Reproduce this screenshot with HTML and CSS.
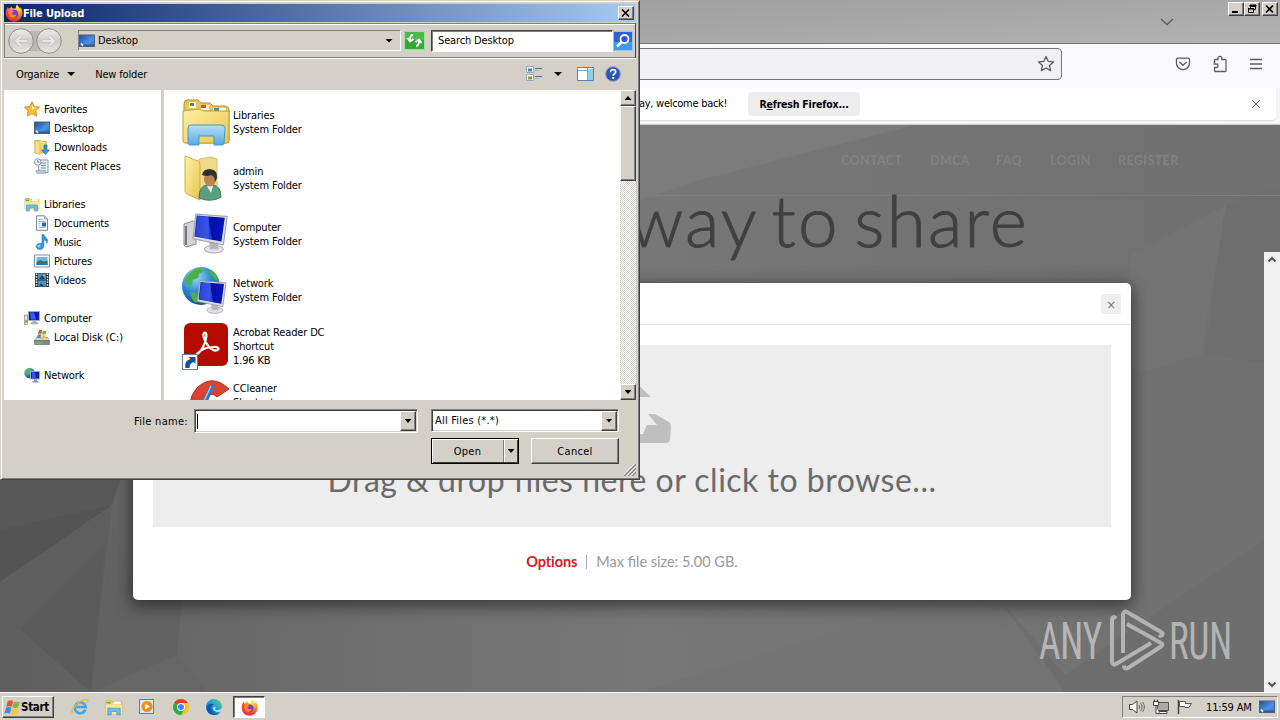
FILE: index.html
```html
<!DOCTYPE html>
<html lang="en">

<head>
    <meta charset="UTF-8">
    <meta name="viewport" content="width=device-width, initial-scale=1.0">
    <title>File Upload</title>
    <link rel="stylesheet" href="styles.css">
</head>

<body>
    <!-- Shared icons and gradients -->
    <svg class="defs" width="0" height="0">
        <defs>
            <linearGradient id="gScreen" x1="0" y1="0" x2="1" y2="1">
                <stop offset="0" stop-color="#1d4c9c"/><stop offset=".6" stop-color="#4b93e4"/><stop offset="1" stop-color="#2a6ec8"/>
            </linearGradient>
            <linearGradient id="gBlue" x1="0" y1="0" x2="1" y2="0">
                <stop offset="0" stop-color="#0a1cae"/><stop offset=".45" stop-color="#2240e0"/><stop offset=".5" stop-color="#0210a8"/><stop offset="1" stop-color="#0418c0"/>
            </linearGradient>
            <linearGradient id="gFolder" x1="0" y1="0" x2="1" y2="1">
                <stop offset="0" stop-color="#fdf3a6"/><stop offset="1" stop-color="#e8c44c"/>
            </linearGradient>
            <linearGradient id="gStand" x1="0" y1="0" x2="0" y2="1">
                <stop offset="0" stop-color="#b5e0f8"/><stop offset="1" stop-color="#58a9de"/>
            </linearGradient>
            <radialGradient id="gGlobe" cx=".35" cy=".25" r=".85">
                <stop offset="0" stop-color="#9be0f5"/><stop offset=".5" stop-color="#2a86d0"/><stop offset="1" stop-color="#123f8c"/>
            </radialGradient>
            <radialGradient id="gFox" cx=".7" cy=".15" r="1">
                <stop offset="0" stop-color="#fff04a"/><stop offset=".35" stop-color="#ffa320"/><stop offset=".7" stop-color="#ff4038"/><stop offset="1" stop-color="#d6106c"/>
            </radialGradient>
            <linearGradient id="gRound" x1="0" y1="0" x2="0" y2="1">
                <stop offset="0" stop-color="#eeecea"/><stop offset=".5" stop-color="#cfccc8"/><stop offset="1" stop-color="#e8e6e3"/>
            </linearGradient>
            <linearGradient id="gEdge" x1="0" y1="1" x2="1" y2="0">
                <stop offset="0" stop-color="#0c59a4"/><stop offset=".5" stop-color="#1b9de2"/><stop offset="1" stop-color="#5fd968"/>
            </linearGradient>
        </defs>

        <symbol id="i-firefox" viewBox="0 0 16 16">
            <path d="M8 15.8A7.5 7.5 0 0 1 .6 8.3C.6 5.9 1.4 4 2.6 2.4l.5 1.8L5 3.4 5.3 1.9 7 4l2.5.1C9.600 2.400 9.900 1.200 10.700.2c.5 1.600 1.900 2.500 2.900 3.700.2-.4.1-.8.1-1.200 1.300 1.600 1.800 3.600 1.800 5.600A7.500 7.500 0 0 1 8 15.800z" fill="url(#gFox)"/>
            <circle cx="8.200" cy="8.800" r="3.600" fill="#7b3fc4"/>
            <path d="M3.200 6.200c1.800-.9 3.500-.4 4.800.7-1 .2-1.900.5-1.800 1.300.1 1.500 2.600 2 4 .8-.3 2.300-2 3.200-3.800 3-2.400-.4-3.500-2.800-3.200-5.800z" fill="#ff8a1e"/>
        </symbol>
        <symbol id="i-desktop" viewBox="0 0 16 16">
            <rect x=".5" y="2" width="15" height="11.500" fill="url(#gScreen)" stroke="#4d637c"/>
            <path d="M1 11.500h14v1.800H1z" fill="#3a5a80"/>
            <path d="M1.500 11.500l1-1.500 2 2-1 1.500z" fill="#e6f4ff"/>
        </symbol>
        <symbol id="i-star" viewBox="0 0 16 16">
            <path d="M8 .8l2.300 4.800 5.200.6-3.800 3.600 1 5.200L8 12.500 3.300 15l1-5.200L.5 6.200l5.200-.6z" fill="#fcbf3c" stroke="#dd8518"/>
            <path d="M8 3l1.400 3.400 3.600.5-5 1.500z" fill="#fff0a8"/>
        </symbol>
        <symbol id="i-download" viewBox="0 0 16 16">
            <path d="M1 1.500h6l1 1h4.500V14H1z" fill="url(#gFolder)" stroke="#c9a238" stroke-width=".7"/>
            <path d="M1 1.500l5 2V15.500L1 14z" fill="#f8e289" stroke="#caa640" stroke-width=".6"/>
            <path d="M10 6h3v5h2.500l-4 4.500-4-4.500H10z" fill="#349be4" stroke="#17659f" stroke-width=".6"/>
        </symbol>
        <symbol id="i-recent" viewBox="0 0 16 16">
            <path d="M4 2h10v12.500H5z" fill="#e9f0f4" stroke="#8b9ba6"/>
            <path d="M7 5h5M7 7.500h5M7 10h5" stroke="#5c8fb5"/>
            <path d="M2 12.500h9.500v2.800H3z" fill="#b8ccd8" stroke="#8497a5" stroke-width=".6"/>
            <circle cx="3.800" cy="4" r="3.200" fill="#fff" stroke="#8094a0"/>
            <path d="M3.800 2v2.200h1.700" stroke="#345" fill="none" stroke-width=".8"/>
        </symbol>
        <symbol id="i-libs" viewBox="0 0 48 48">
            <path d="M2 6q0-4 3-4h11l3 3h9l3 3h11q5 0 5 4v30q0 3-3 3H5q-3 0-3-3z" fill="#e5c75b" stroke="#b9912c"/>
            <path d="M7 4h7v6H7z" fill="#fff"/><path d="M8 5h4v3H8z" fill="#4b9646"/>
            <path d="M19 7h8v5h-8z" fill="#fff"/><path d="M19 7h5v3h-5z" fill="#d8483c"/>
            <path d="M31 10h13v4H31z" fill="#fff"/><path d="M32 10h5v3h-5z" fill="#3c92a0"/>
            <path d="M1 13l16-2 5 2h25v30q0 2-2 2H3q-2 0-2-2z" fill="url(#gFolder)" stroke="#c39c36"/>
            <path d="M6 30q0-3 3-3h30q4 0 4 3l-1 15q0 2-2 2h-8v-9H17v9H8q-2 0-2-2z" fill="url(#gStand)" stroke="#489acb"/>
        </symbol>
        <symbol id="i-doc" viewBox="0 0 16 16">
            <path d="M2.500.8h8l3 3v11.500h-11z" fill="#fafcff" stroke="#7889a0"/>
            <path d="M10.500.8v3h3" fill="#dce6f0" stroke="#7889a0" stroke-width=".7"/>
            <path d="M4.500 4.500h4M4.500 6.500h7M4.500 8.500h2M4.500 10.500h2M4.500 12.500h7" stroke="#8ea6c2" stroke-width=".8"/>
            <path d="M8 7.500h4v4H8z" fill="#2c66a8"/>
        </symbol>
        <symbol id="i-music" viewBox="0 0 16 16">
            <path d="M8 .5h1.800c.3 2.500 3.700 3 3.700 6 0 1.300-.4 2-1 2.700.2-2.500-1.300-3-2.700-3.400v6.400c0 2-1.700 3.200-4 3.200-2 0-3.600-1-3.600-2.800 0-2 1.800-3.200 4-3.200.7 0 1.300.1 1.800.4z" fill="#2c98e2" stroke="#1a6db4" stroke-width=".6"/>
            <circle cx="5" cy="12" r="1.500" fill="#8fd2fa"/>
        </symbol>
        <symbol id="i-pic" viewBox="0 0 16 16">
            <path d="M.5 2h15v12H.5z" fill="#fff" stroke="#7193ad"/>
            <path d="M2.500 4h11v8h-11z" fill="#68bcec"/>
            <path d="M2.500 9l4-2 3 1.500 4-1v4.500h-11z" fill="#34795a"/><path d="M2.500 10.500h11V12h-11z" fill="#2878b4"/>
        </symbol>
        <symbol id="i-video" viewBox="0 0 16 16">
            <path d="M1 1h14v14H1z" fill="#29323a"/>
            <path d="M4 1.500h8v6H4zM4 8.500h8v6H4z" fill="#4a93c6"/>
            <path d="M2.500 1.500v13M13.500 1.500v13" stroke="#fff" stroke-width="1.500" stroke-dasharray="1.500 1.200"/>
            <path d="M5 7l3-4 3 4zM5 14l2-3 3 3z" fill="#1e3f60"/><circle cx="10" cy="3.500" r="1" fill="#e58f83"/>
        </symbol>
        <symbol id="i-pc" viewBox="0 0 16 16">
            <path d="M.5 5h3v9.500h-3z" fill="#e5e2c8" stroke="#858585" stroke-width=".7"/>
            <path d="M1 10h2v3H1z" fill="#9db35a"/>
            <path d="M4.500 1.500h11v9h-11z" fill="#0c1fb4" stroke="#a3acb9"/>
            <path d="M6 2.500h4l2 7H7z" fill="#3c5ae6"/>
            <path d="M8.500 11h4v1.500h2v1.700h-8v-1.700h2z" fill="#a9aeb8"/>
        </symbol>
        <symbol id="i-disk" viewBox="0 0 16 16">
            <path d="M2.500 8.500h11l2 3H.5z" fill="#cfd5cf" stroke="#788078" stroke-width=".6"/>
            <path d="M.5 11.500h15v4H.5z" fill="#7d8d86" stroke="#55645d" stroke-width=".6"/>
            <path d="M1.500 13h6v1.500h-6z" fill="#5fcf4a"/>
            <use href="#i-win" x="2" y="0" width="12" height="11"/>
        </symbol>
        <symbol id="i-win" viewBox="0 0 16 16">
            <path d="M3.500 2C5.500.8 7 1.100 8.500 2L7.200 7.400C5.600 6.500 4 6.500 2 7.500z" fill="#ea5427"/>
            <path d="M9.300 2.400c1.700.9 3.600.9 5.700-.1l-1.500 5.500c-1.900.9-3.500.9-5.500-.1z" fill="#7db83c"/>
            <path d="M1.800 8.300c1.900-1 3.500-1 5.200-.1l-1.500 5.600c-1.700-1-3.400-.8-5.200 0z" fill="#3d8ede"/>
            <path d="M7.800 8.600c1.900.9 3.600.9 5.500.1l-1.500 5.600c-2 .9-3.700.9-5.500-.1z" fill="#f8c52c"/>
        </symbol>
        <symbol id="i-net" viewBox="0 0 16 16">
            <circle cx="5.500" cy="6" r="5.200" fill="url(#gGlobe)"/>
            <path d="M2 3l3-2 2 2-2 2-1 3-2-1z" fill="#52b651"/>
            <path d="M6.500 4.500h9v7.500h-9z" fill="#0c1fb4" stroke="#a3acb9"/>
            <path d="M8 5.500h3l1 6H8z" fill="#3c5ae6"/>
            <path d="M10 12.500h3v1.500h1.500v1.500h-6V14H10z" fill="#8c93a0"/>
        </symbol>
        <symbol id="i-monitor" viewBox="0 0 40 44">
            <ellipse cx="23" cy="38" rx="10" ry="4" fill="#e2e2e6" stroke="#a3a3aa"/>
            <path d="M18 29l9 2 1 7h-9z" fill="#b4b5bc"/>
            <path d="M4 1l33 2.500-4 30L1 27z" fill="#dcdde2" stroke="#9698a2"/>
            <path d="M5 2.500L34.500 5 31 30 2.500 24.500z" fill="url(#gBlue)"/>
            <path d="M6 3l11 1 4 24-18-4z" fill="#4b6cf0" opacity=".5"/>
        </symbol>
        <symbol id="i-explorer" viewBox="0 0 16 16">
            <path d="M1 2.500h5l1 1h8v9.500H1z" fill="#f4d872" stroke="#c7a23c" stroke-width=".6"/>
            <path d="M8 3.200h6v2H8z" fill="#fff"/><path d="M2 3.500h3v1.500H2z" fill="#4fae56"/>
            <path d="M1 6h14v8H1z" fill="#fbe99c"/>
            <path d="M2.500 9h11v6h-3v-3h-5v3h-3z" fill="#6dbcea" stroke="#3f92c4" stroke-width=".6"/>
        </symbol>
    </svg>

    <div class="desktop">
        <!-- Browser window -->
        <div class="browser">
            <div class="tab-strip">
                <svg class="tabs-arrow" width="14" height="8" viewBox="0 0 14 8"><path d="M1 1l6 5.500L13 1" fill="none" stroke="#5e5e5e" stroke-width="1.300"/></svg>
                <div class="win-buttons">
                    <span class="win-btn"><svg width="12" height="10"><path d="M2 7h6v2H2z"/></svg></span>
                    <span class="win-btn"><svg width="12" height="10"><path d="M4.500 1.500h5v4h-5zM4 1h6v1.500H4z" fill="none" stroke="#000"/><path d="M2.500 4.500h5v4h-5z" fill="#d4d0c8" stroke="#000"/><path d="M2 4h6v1.500H2z"/></svg></span>
                    <span class="win-btn last"><svg width="12" height="10"><path d="M2 1.500l7 7M9 1.500l-7 7" stroke="#000" stroke-width="1.700"/></svg></span>
                </div>
            </div>

            <div class="nav-bar">
                <div class="url-bar">
                    <svg width="18" height="18" viewBox="0 0 18 18"><path d="M9 1.500l2.200 4.800 5.200.6-3.900 3.500 1.100 5.200L9 13l-4.600 2.600 1.100-5.200L1.600 6.900l5.200-.6z" fill="none" stroke="#5b5b66" stroke-width="1.300" stroke-linejoin="round"/></svg>
                </div>
                <div class="nav-icons">
                    <svg width="16" height="16" viewBox="0 0 16 16" fill="none" stroke="#5b5b66" stroke-width="1.300" stroke-linecap="round"><path d="M3 2.200h10q1.500 0 1.500 1.500v3.500a6.500 6.500 0 0 1-13 0V3.700Q1.500 2.200 3 2.200z"/><path d="M4.700 6.200L8 9.300l3.300-3.100"/></svg>
                    <svg width="16" height="18" viewBox="0 0 16 18" fill="none" stroke="#5b5b66" stroke-width="1.300" stroke-linejoin="round"><path d="M2.500 8V5.500q0-1 1-1H6V3.200a1.900 1.900 0 0 1 3.800 0v1.300h3.200q1 0 1 1v10q0 1-1 1H3.500q-1 0-1-1v-3h1.800a1.700 1.700 0 0 0 0-3.500H1.500"/></svg>
                    <svg width="14" height="16" viewBox="0 0 14 16"><path d="M1 3.500h12M1 8h12M1 12.500h12" stroke="#5b5b66" stroke-width="1.300"/></svg>
                </div>
            </div>

            <div class="notice-wrap">
                <div class="notice">
                    <span class="notice-text">ay, welcome back!</span>
                    <span class="refresh-btn">R<u>e</u>fresh Firefox...</span>
                    <svg class="notice-close" width="10" height="10" viewBox="0 0 10 10"><path d="M1 1l8 8M9 1L1 9" stroke="#5b5b66"/></svg>
                </div>
            </div>

            <div class="page">
                <svg class="page-bg" viewBox="0 0 1280 567" preserveAspectRatio="none">
                    <defs>
                        <linearGradient id="gPage" x1="0" y1="0" x2="1" y2="0">
                            <stop offset="0" stop-color="#5e5e5e"/><stop offset=".16" stop-color="#696969"/><stop offset=".5" stop-color="#777"/><stop offset="1" stop-color="#707070"/>
                        </linearGradient>
                    </defs>
                    <path d="M0 0h1280v567H0z" fill="url(#gPage)"/>
                    <path d="M640 0h275L700 55l-60 20z" fill="#7b7b7b"/>
                    <path d="M1225 80l55-20v180l-75-10z" fill="#6e6e6e"/>
                    <path d="M1131 130l95-50-25 150-70 20z" fill="#747474"/>
                    <path d="M0 340h125L112 380 0 457z" fill="#585858"/>
                    <path d="M0 405l112-25L0 457z" fill="#545454"/>
                    <path d="M0 457l112-77-21 187L0 487z" fill="#5e5e5e"/>
                    <path d="M91 567L20 504l85-85z" fill="#5b5b5b"/>
                    <path d="M177 530l6-70h-50l-20-60-22 167z" fill="#626262"/>
                    <path d="M91 567l86-37 30 37z" fill="#666"/>
                    <path d="M970 465l95 102H640z" fill="#747474"/>
                    <path d="M1000 475l65 75 199-135v152H1065z" fill="#6d6d6d"/>
                </svg>
                <div class="site-nav">
                    <span class="n1">CONTACT</span><span class="n2">DMCA</span><span class="n3">FAQ</span><span class="n4">LOGIN</span><span class="n5">REGISTER</span>
                </div>
                <div class="hero">way to share</div>

                <div class="modal">
                    <div class="modal-head"><span class="modal-close">×</span></div>
                    <div class="drop-zone">
                        <svg class="upload-icon" width="80" height="60" viewBox="0 0 80 60"><path d="M39 -1L59 18H48v18H30V18H19zM19 35h6l-10 11h10l4 9h22l4-9h10L56 35h7l14 8q2 2 2 5l-1 13q-1 3-4 3H5q-3 0-4-3L0 49z" fill="#bfbfbf"/></svg>
                        <div class="drop-text">Drag &amp; drop files here or click to browse...</div>
                    </div>
                    <div class="modal-foot"><b>Options</b><i></i><span>Max file size: 5.00 GB.</span></div>
                </div>

                <svg class="watermark" width="196" height="66" viewBox="0 0 196 66">
                    <g fill="#fff" opacity=".48" font-family="Roboto, sans-serif" font-size="51">
                        <text x="2" y="50" textLength="63" lengthAdjust="spacingAndGlyphs">ANY</text>
                        <text x="132" y="50" textLength="63" lengthAdjust="spacingAndGlyphs">RUN</text>
                    </g>
                    <path d="M79 9.500c-2-2-4-2-4 1V53c0 2 2 3 4 2l35-21M86 44V6c0-3 2-4 4-3l34 20c3 2 1 5-2 3M90 15l34 19c2 1 2 2 0 3.500L91 59c-2 1-4 1-4-2.500" fill="none" stroke="#fff" stroke-width="4" opacity=".48"/>
                </svg>

                <div class="page-scroll">
                    <svg width="10" height="7" viewBox="0 0 10 7"><path d="M1.500 5.500L5 2l3.500 3.500" fill="none" stroke="#505050" stroke-width="2"/></svg>
                    <svg width="10" height="7" viewBox="0 0 10 7"><path d="M1.500 1.500L5 5l3.500-3.500" fill="none" stroke="#505050" stroke-width="2"/></svg>
                </div>
            </div>
        </div>

        <!-- Taskbar -->
        <div class="taskbar">
            <div class="start-btn"><svg width="17" height="17"><use href="#i-win"/></svg>Start</div>
            <div class="quick">
                <svg width="18" height="18" viewBox="0 0 18 18"><path d="M14.500 11.500A5.500 5.500 0 1 1 14.700 9H5" fill="none" stroke="#42a6e4" stroke-width="2.600"/><path d="M1.500 15.500C-1 12 8 1.500 15.500 1.500c2 0 1.500 2 1 3" fill="none" stroke="#e9b92e" stroke-width="1.300"/></svg>
                <svg width="18" height="18"><use href="#i-explorer"/></svg>
                <svg width="18" height="18" viewBox="0 0 18 18"><path d="M1.500 1.500h14v14h-14z" fill="#d8eaf8" stroke="#4785bd"/><circle cx="9" cy="8.500" r="5.500" fill="#f38b1c"/><path d="M7 5.500l5 3-5 3z" fill="#fff"/></svg>
                <svg width="18" height="18" viewBox="0 0 18 18"><circle cx="9" cy="9" r="8" fill="#fbc116"/><path d="M9 9L2.100 5A8 8 0 0 1 15.900 5H9z" fill="#e33b2e"/><path d="M2.100 5A8 8 0 0 0 9 17l3.500-6L9 9z" fill="#2da94f"/><circle cx="9" cy="9" r="4" fill="#fff"/><circle cx="9" cy="9" r="3" fill="#4285f4"/></svg>
                <svg width="18" height="18" viewBox="0 0 18 18"><circle cx="9" cy="9" r="8" fill="url(#gEdge)"/><path d="M1.500 10C2 6 6 5 9 6.500c-3 1-4 5-1 8 2 1.600 5 1.500 7 .2-4 4.300-13 2.300-13.500-4.700z" fill="#0e5cad"/><path d="M9.200 8.500c2 .2 1.500 2 .8 2.700 2 1.500 5.500 1 7-1.500v3c-2.500 2-7.500 1.600-8.800-1.200-.5-1.200 0-2.500 1-3z" fill="#d4d0c8"/></svg>
            </div>
            <div class="task-active"><svg width="17" height="17"><use href="#i-firefox"/></svg></div>
            <div class="tray">
                <svg width="17" height="16" viewBox="0 0 17 16"><path d="M1.500 5.500h3L9 2v12l-4.500-3.500h-3z" fill="#fff" stroke="#444"/><path d="M11 6q1.500 2 0 4M12.700 4q3 4 0 8M14.600 3q3.500 5 0 10" fill="none" stroke="#666"/></svg>
                <svg width="17" height="16" viewBox="0 0 17 16"><path d="M5.500 3.500h11v8h-11z" fill="#aaa" stroke="#555"/><path d="M7 12.500h8v2H7z" fill="#fff" stroke="#444"/><path d="M1.500 2.500h5v4h-5zM2.500.5v2M5.500.5v2M4 6.500v8h3" fill="#fff" stroke="#444"/></svg>
                <svg width="17" height="16" viewBox="0 0 17 16"><path d="M2.500 1v14" stroke="#444" stroke-width="1.500"/><path d="M3.500 2.500h6v2h6l-2.500 4H9V7.500H3.500z" fill="#fff" stroke="#555"/></svg>
                <span class="clock">11:59 AM</span>
                <svg width="16" height="16"><use href="#i-desktop"/></svg>
            </div>
        </div>

        <!-- File upload dialog -->
        <div class="dialog">
            <div class="dlg-title">
                <svg width="18" height="18"><use href="#i-firefox"/></svg>
                <span>File Upload</span>
                <span class="win-btn"><svg width="12" height="10"><path d="M2 1.500l7 7M9 1.500l-7 7" stroke="#000" stroke-width="1.500"/></svg></span>
            </div>

            <div class="dlg-nav">
                <svg class="back-fwd" width="56" height="28" viewBox="0 0 56 28">
                    <path d="M14 4h28v20H14z" fill="#bbb8b4"/>
                    <g fill="url(#gRound)" stroke="#8e8c89"><circle cx="14" cy="14" r="12.300"/><circle cx="42" cy="14" r="12.300"/></g>
                    <path d="M20 14H9m5-5l-5 5 5 5M36 14h11m-5-5l5 5-5 5" fill="none" stroke="#c4c2bf" stroke-width="3.500"/>
                    <path d="M20 14H9m5-5l-5 5 5 5M36 14h11m-5-5l5 5-5 5" fill="none" stroke="#e9e7e5" stroke-width="2"/>
                </svg>
                <div class="address">
                    <svg width="16" height="16"><use href="#i-desktop"/></svg>
                    <span>Desktop</span>
                    <i class="arrow"></i>
                </div>
                <svg class="refresh" width="21" height="19" viewBox="0 0 21 19"><path d="M.5.5h20v18H.5z" fill="#32ab35" stroke="#a8dba0"/><path d="M1 1h19v8H1z" fill="#66c869" opacity=".5"/><path d="M9 4q-3 0-3 5M3.500 7L6 10.500 9.500 8M12 15q3 0 3-5M11.500 11L15 8.500 17.500 12" fill="none" stroke="#fff" stroke-width="1.800"/></svg>
                <div class="search">Search Desktop</div>
                <svg class="search-go" width="20" height="20" viewBox="0 0 20 20"><path d="M.5.5h19v19H.5z" fill="#2f62d4" stroke="#9fc2ee"/><path d="M1 11h18v8H1z" fill="#46b4f0" opacity=".7"/><circle cx="11.500" cy="8" r="4" fill="#2a57cc" stroke="#fff" stroke-width="1.800"/><path d="M8.500 11L4 15.500" stroke="#fff" stroke-width="2.500"/></svg>
            </div>

            <div class="dlg-tools">
                <span>Organize</span><i class="arrow"></i>
                <span class="new-folder">New folder</span>
                <svg class="view-icon" width="17" height="16" viewBox="0 0 17 16"><path d="M.5.5h7v6h-7zM.5 8.500h7v6h-7z" fill="#fff" stroke="#9aa5b2"/><path d="M2 2.500h4v3H2z" fill="#3d83c6"/><path d="M2 10.500h4v3H2z" fill="#7c9c38"/><path d="M9 2.500h7M9 10.500h7" stroke="#4b6c8e"/><path d="M9 4.500h4M9 12.500h4" stroke="#9eb0c2"/></svg>
                <i class="arrow"></i>
                <svg class="pane-icon" width="17" height="15" viewBox="0 0 17 15"><path d="M.5.5h16v13H.5z" fill="#fff" stroke="#5682ac"/><path d="M1 3.500h10M10.500 1v12" stroke="#7aa3c4"/><path d="M11 2h5v11h-5z" fill="#8fcfe8"/></svg>
                <svg class="help-icon" width="16" height="16" viewBox="0 0 16 16"><circle cx="8" cy="8" r="7.300" fill="#2d55b4" stroke="#8294bb"/><path d="M5.500 6.200c0-3.600 5.200-3.200 5.200-.3 0 1.800-2.500 1.900-2.500 3.800" fill="none" stroke="#fff" stroke-width="1.700"/><path d="M7.300 11h1.900v1.900H7.300z" fill="#fff"/></svg>
            </div>

            <div class="dlg-main">
                <div class="side">
                    <div class="side-group">
                        <div class="top"><svg><use href="#i-star"/></svg>Favorites</div>
                        <div><svg><use href="#i-desktop"/></svg>Desktop</div>
                        <div><svg><use href="#i-download"/></svg>Downloads</div>
                        <div><svg><use href="#i-recent"/></svg>Recent Places</div>
                    </div>
                    <div class="side-group">
                        <div class="top"><svg><use href="#i-explorer"/></svg>Libraries</div>
                        <div><svg><use href="#i-doc"/></svg>Documents</div>
                        <div><svg><use href="#i-music"/></svg>Music</div>
                        <div><svg><use href="#i-pic"/></svg>Pictures</div>
                        <div><svg><use href="#i-video"/></svg>Videos</div>
                    </div>
                    <div class="side-group">
                        <div class="top"><svg><use href="#i-pc"/></svg>Computer</div>
                        <div><svg><use href="#i-disk"/></svg>Local Disk (C:)</div>
                    </div>
                    <div class="side-group">
                        <div class="top"><svg><use href="#i-net"/></svg>Network</div>
                    </div>
                </div>

                <div class="files">
                    <div class="file"><svg viewBox="0 0 48 48"><use href="#i-libs"/></svg><p>Libraries<br>System Folder</p></div>
                    <div class="file">
                        <svg viewBox="0 0 48 48">
                            <path d="M17 5l12-2 6 2v35l-18 5z" fill="#f0d987" stroke="#d9bd68"/>
                            <path d="M3 2l13 5q2 1 2 4v35L5 40q-2-1-2-3z" fill="url(#gFolder)" stroke="#d0ac4a"/>
                            <path d="M17 44q0-12 8-13h6q8 1 8 12-10 6-22 1z" fill="#5a9f80" stroke="#3b7c60"/>
                            <path d="M25 32l4 7 2-7z" fill="#eef3ef"/>
                            <ellipse cx="28" cy="25" rx="6" ry="7.500" fill="#b98457"/>
                            <path d="M20 21q1-6 8-6 8 1 7 9l-2 4q0-6-4-7-4 2-9 0z" fill="#32302f"/>
                        </svg><p>admin<br>System Folder</p>
                    </div>
                    <div class="file">
                        <svg viewBox="0 0 48 48">
                            <path d="M2 14l9-3 3 2v21l-10 3-2-2z" fill="#d2d3d6" stroke="#8a8b90"/><path d="M4 16v19" stroke="#777" stroke-width="2"/>
                            <use href="#i-monitor" x="10" y="3" width="38" height="42"/>
                        </svg><p>Computer<br>System Folder</p>
                    </div>
                    <div class="file">
                        <svg viewBox="0 0 48 48">
                            <circle cx="19" cy="20" r="19" fill="url(#gGlobe)"/>
                            <path d="M7 8q5-6 12-6l3 3-5 3-1 4-5 2-2 6-5-2-1-5zM27 3q8 4 10 13l-5-3-4-5zM8 26l6 1 3 6-3 4q-5-3-6-11z" fill="#4cb04a"/>
                            <use href="#i-monitor" x="14" y="14" width="33" height="35"/>
                        </svg><p>Network<br>System Folder</p>
                    </div>
                    <div class="file">
                        <svg viewBox="0 0 48 48">
                            <rect x="2" y="1" width="44" height="43" rx="6" fill="#b30b00"/>
                            <path d="M14 33c4-2 10-11 10.500-19 0-5-3.500-4-3 0 1.500 8 8 15 13 14.500 4-1 2-4-3-3.500-6 0-12 2.500-15.500 6-4 4-6 3-2 2z" fill="none" stroke="#fff" stroke-width="2.200"/>
                            <path d="M.5 32.500h15v15H.5z" fill="#fff" stroke="#6e7ba0"/>
                            <path d="M3.500 46c-1-5 1-8 5-9l-2-2h7v7l-2-2c-3 1-4 3-4 6z" fill="#174f9b"/>
                        </svg><p>Acrobat Reader DC<br>Shortcut<br>1.96 KB</p>
                    </div>
                    <div class="file cut">
                        <svg viewBox="0 0 48 48">
                            <path d="M47 11L35 19q-5-5-10-1-8 5-4 18l-12 8Q4 22 15 10 30-5 47 11z" fill="#d84431" stroke="#a93224"/>
                            <path d="M29 7h4L22 32l-5 12H8l7-12z" fill="#2c79c8"/><path d="M29 8L17 34" stroke="#93c5ef" stroke-width="1.500"/>
                        </svg><p>CCleaner<br>Shortcut</p>
                    </div>
                </div>

                <div class="scroll">
                    <span class="scroll-btn"><i class="arrow up"></i></span>
                    <span class="thumb"></span>
                    <span class="scroll-btn down"><i class="arrow"></i></span>
                </div>
            </div>

            <div class="dlg-foot">
                <label>File name:</label>
                <div class="field name"><i class="caret"></i><span class="drop-btn"><i class="arrow"></i></span></div>
                <div class="field type"><span>All Files (*.*)</span><span class="drop-btn"><i class="arrow"></i></span></div>
                <div class="buttons">
                    <div class="btn open"><span>Open</span><i class="split"><i class="arrow"></i></i></div>
                    <div class="btn">Cancel</div>
                </div>
                <svg class="grip" width="12" height="12" viewBox="0 0 12 12"><path d="M0 12L12 0M4 12l8-8M8 12l4-4" stroke="#808080" stroke-width="1.500"/><path d="M-1.500 12l12-12M2.500 12l9.500-9.500M6.500 12l5.500-5.500" stroke="#fff"/></svg>
            </div>
        </div>
    </div>
</body>

</html>
```

FILE: styles.css
```css
/* Global Styles */
* {
    box-sizing: border-box;
}

body {
    margin: 0;
    overflow: hidden;
    font-family: 'DejaVu Sans Condensed', 'DejaVu Sans', sans-serif;
    font-stretch: condensed;
    font-size: 11px;
    letter-spacing: -0.15px;
    color: #000;
}

svg {
    display: block;
    flex: none;
}

.defs {
    position: absolute;
}

.desktop {
    position: relative;
    width: 1280px;
    height: 720px;
    display: flex;
    flex-direction: column;
}

/* Browser window */
.browser {
    height: 692px;
    display: flex;
    flex-direction: column;
}

.tab-strip {
    height: 44px;
    display: flex;
    justify-content: flex-end;
    align-items: flex-start;
    background: linear-gradient(176deg, #989898 0%, #a4a4a4 50%, #b2b2b2 100%);
    border-bottom: 1px solid #777;
}

.tabs-arrow {
    margin: 18px 54px 0 0;
}

.win-buttons {
    display: flex;
    padding: 2px 2px 0 0;
}

.win-btn {
    width: 16px;
    height: 14px;
    padding: 1px;
    background: #d4d0c8;
    border: 1px solid;
    border-color: #fff #404040 #404040 #fff;
    box-shadow: inset -1px -1px 0 #808080;
}

.win-btn.last {
    margin-left: 2px;
}

.nav-bar {
    height: 44px;
    display: flex;
    justify-content: space-between;
    background: #f9f9fb;
}

.url-bar {
    width: 1062px;
    height: 32px;
    margin-top: 4px;
    padding-right: 6px;
    display: flex;
    justify-content: flex-end;
    align-items: center;
    background: #f0f0f4;
    border: 1px solid #73737b;
    border-radius: 4px;
}

.nav-icons {
    display: flex;
    align-items: center;
    gap: 21px;
    height: 40px;
    padding-right: 17px;
}

.notice-wrap {
    height: 37px;
    padding: 0 4px 4px;
    background: #f6f6f8;
    border-bottom: 1px solid #ccc;
}

.notice {
    height: 32px;
    padding-left: 635px;
    display: flex;
    align-items: center;
    background: #fff;
    border-radius: 0 0 4px 4px;
    box-shadow: 0 1px 1px #ddd;
}

.notice-text {
    width: 109px;
    padding-bottom: 2px;
    letter-spacing: -0.28px;
    white-space: nowrap;
}

.refresh-btn {
    width: 112px;
    line-height: 24px;
    text-align: center;
    background: #ededed;
    border-radius: 4px;
    font-weight: 700;
    font-size: 10.5px;
    letter-spacing: -0.2px;
}

.notice-close {
    margin-left: auto;
    margin-right: 15px;
}

/* Web page */
.page {
    position: relative;
    flex: 1;
    overflow: hidden;
}

.page-bg {
    position: absolute;
    inset: 0;
    width: 100%;
    height: 100%;
}

.site-nav {
    position: relative;
    height: 71px;
    padding-left: 841px;
    display: flex;
    align-items: center;
    border-bottom: 1px solid #7e7e7e;
    color: #828282;
    font-family: Lato, sans-serif;
    font-size: 12.5px;
    font-weight: 700;
    letter-spacing: 0.4px;
}

.n1 { width: 89px; }
.n2 { width: 66px; }
.n3 { width: 54px; }
.n4 { width: 68px; }

.hero {
    position: relative;
    width: 1029px;
    margin-top: -12px;
    line-height: 72px;
    text-align: right;
    white-space: nowrap;
    font-family: Lato, sans-serif;
    font-weight: 300;
    font-size: 71px;
    letter-spacing: 2.2px;
    word-spacing: -7px;
    color: #404040;
    -webkit-text-stroke: 1px #404040;
}

.modal {
    position: absolute;
    left: 133px;
    top: 158px;
    width: 998px;
    height: 317px;
    background: #fff;
    border-radius: 5px;
    box-shadow: 0 4px 16px 2px rgba(0, 0, 0, 0.5);
}

.modal-head {
    height: 42px;
    padding: 11px 10px;
    display: flex;
    justify-content: flex-end;
    border-bottom: 1px solid #e5e5e5;
}

.modal-close {
    width: 20px;
    height: 20px;
    line-height: 21px;
    text-align: center;
    font-size: 13px;
    color: #777;
    background: #eee;
    border-radius: 2px;
}

.drop-zone {
    height: 182px;
    margin: 20px 20px 0;
    padding-top: 34px;
    display: flex;
    flex-direction: column;
    align-items: center;
    background: #ededed;
}

.upload-icon {
    overflow: visible;
}

.drop-text {
    margin-top: 21px;
    line-height: 40px;
    white-space: nowrap;
    font-family: Lato, sans-serif;
    font-size: 32px;
    font-weight: 400;
    letter-spacing: 0.5px;
    color: #6a6a6a;
}

.modal-foot {
    height: 69px;
    display: flex;
    justify-content: center;
    align-items: center;
    font-family: Lato, sans-serif;
    font-size: 14.5px;
    letter-spacing: 0;
    color: #999;
}

.modal-foot b {
    color: #d8191f;
    font-size: 14.5px;
    letter-spacing: -0.1px;
}

.modal-foot i {
    width: 1px;
    height: 14px;
    margin: 0 9px;
    background: #aaa;
}

.watermark {
    position: absolute;
    left: 1037px;
    top: 484px;
    overflow: visible;
}

.page-scroll {
    position: absolute;
    right: 0;
    top: 127px;
    bottom: 0;
    width: 16px;
    padding: 4px 0;
    display: flex;
    flex-direction: column;
    justify-content: space-between;
    align-items: center;
    background: #f0f0f0;
}

/* Taskbar */
.taskbar {
    height: 28px;
    padding: 3px 2px 2px;
    display: flex;
    background: #d4d0c8;
    border-top: 1px solid #fff;
}

.start-btn {
    width: 52px;
    height: 22px;
    padding-left: 1px;
    display: flex;
    align-items: center;
    font-weight: 700;
    font-size: 11.5px;
    letter-spacing: -0.3px;
    border: 1px solid;
    border-color: #fff #404040 #404040 #fff;
    box-shadow: inset -1px -1px 0 #808080;
}

.quick {
    display: flex;
    align-items: center;
    gap: 15.5px;
    margin-left: 17px;
}

.task-active {
    width: 32px;
    height: 22px;
    margin-left: 10px;
    display: flex;
    align-items: center;
    justify-content: center;
    background: #fff;
    border: 1px solid;
    border-color: #404040 #fff #fff #404040;
    box-shadow: inset 1px 1px 0 #808080;
}

.tray {
    width: 156px;
    height: 22px;
    margin-left: auto;
    padding: 0 1px 0 5px;
    display: flex;
    align-items: center;
    gap: 7px;
    border: 1px solid;
    border-color: #808080 #fff #fff #808080;
}

.clock {
    margin-left: 6px;
    white-space: nowrap;
}

/* File dialog */
.dialog {
    position: absolute;
    left: 0;
    top: 0;
    width: 640px;
    height: 480px;
    padding: 2px;
    display: flex;
    flex-direction: column;
    background: #d4d0c8;
    border: 1px solid;
    border-color: #d4d0c8 #404040 #404040 #d4d0c8;
    box-shadow: inset 1px 1px 0 #fff, inset -1px -1px 0 #808080;
}

.arrow {
    flex: none;
    width: 7px;
    height: 4px;
    background: #000;
    clip-path: polygon(0 0, 100% 0, 50% 100%);
}

.arrow.up {
    clip-path: polygon(50% 0, 100% 100%, 0 100%);
}

.dlg-title {
    height: 18px;
    margin: 1px 1px;
    padding: 0 1px 0 1px;
    display: flex;
    align-items: center;
    background: linear-gradient(90deg, #0a246a, #a6caf0);
    color: #fff;
    font-weight: 700;
    letter-spacing: -0.15px;
}

.dlg-title .win-btn {
    margin-left: auto;
    margin-right: 1px;
}

.dlg-nav {
    height: 35px;
    margin: 0 1px;
    display: flex;
    align-items: center;
    border: 1px solid #808080;
    border-right-color: #404040;
    box-shadow: 0 1px 0 #fff, inset 0 1px 0 #fff;
}

.back-fwd {
    margin-left: 2px;
}

.address {
    width: 323px;
    height: 21px;
    margin-left: 15px;
    padding: 0 7px 0 0;
    display: flex;
    align-items: center;
    gap: 3px;
    border: 1px solid;
    border-color: #808080 #fff #fff #808080;
}

.address .arrow,
.dlg-tools > .arrow {
    width: 8px;
}

.address .arrow {
    margin-left: auto;
}

.refresh {
    margin-left: 3px;
}

.search {
    width: 182px;
    height: 22px;
    margin-left: 6px;
    padding-left: 6px;
    line-height: 20px;
    background: #fff;
    border: 1px solid;
    border-color: #404040 #fff #fff #404040;
    box-shadow: inset 1px 1px 0 #808080;
}

.dlg-tools {
    height: 32px;
    padding: 0 16px 0 13px;
    display: flex;
    align-items: center;
}

.dlg-tools > .arrow {
    margin-left: 8px;
}

.dlg-tools .new-folder {
    margin-left: 20px;
}

.dlg-tools .view-icon {
    margin-left: auto;
}

.dlg-tools .view-icon + .arrow {
    margin-left: 11px;
}

.pane-icon {
    margin-left: 15px;
}

.help-icon {
    margin-left: 11px;
}

.dlg-main {
    height: 310px;
    margin: 0 1px;
    display: flex;
}

.side {
    width: 160px;
    padding: 10px 0 0 20px;
    background: #fff;
    border-right: 3px solid #d4d0c8;
}

.side-group {
    margin-bottom: 19px;
}

.side-group div {
    height: 19px;
    padding-left: 10px;
    display: flex;
    align-items: center;
    gap: 4px;
}

.side-group .top {
    padding-left: 0;
}

.side-group svg {
    width: 16px;
    height: 16px;
    margin-bottom: 2px;
}

.files {
    flex: 1;
    padding: 4px 0 0 18px;
    background: #fff;
    overflow: hidden;
}

.file {
    height: 56px;
    display: flex;
    align-items: center;
    gap: 3px;
}

.file svg {
    width: 48px;
    height: 48px;
}

.file p {
    margin: 0;
    padding-top: 2px;
    line-height: 14px;
}

.file.cut p {
    padding-bottom: 14px;
}

.scroll {
    width: 16px;
    display: flex;
    flex-direction: column;
    background: repeating-conic-gradient(#fff 0 25%, #d4d0c8 0 50%) 0 0 / 2px 2px;
}

.scroll-btn,
.thumb,
.drop-btn {
    display: flex;
    align-items: center;
    justify-content: center;
    background: #d4d0c8;
    border: 1px solid;
    border-color: #fff #404040 #404040 #fff;
    box-shadow: inset -1px -1px 0 #808080;
}

.scroll-btn {
    height: 16px;
}

.scroll-btn.down {
    margin-top: auto;
}

.thumb {
    height: 75px;
}

/* Dialog footer */
.dlg-foot {
    position: relative;
    flex: 1;
    padding: 9px 18px 0 0;
    display: grid;
    grid-template-columns: 185px 224px 188px;
    grid-template-rows: 24px 26px;
    justify-content: end;
    column-gap: 6px;
    row-gap: 5px;
}

.dlg-foot label {
    line-height: 25px;
    text-align: right;
    letter-spacing: 0.3px;
}

.dlg-foot label,
.field.name {
    margin-left: -7px;
    margin-right: 7px;
}

.field {
    height: 24px;
    padding: 1px;
    display: flex;
    align-items: center;
    background: #fff;
    border: 1px solid;
    border-color: #808080 #fff #fff #808080;
    box-shadow: inset 1px 1px 0 #404040, inset -1px -1px 0 #d4d0c8;
}

.field.type {
    height: 23px;
    padding-left: 3px;
    letter-spacing: 0.2px;
}

.caret {
    width: 1px;
    height: 15px;
    margin-left: 1px;
    background: #000;
}

.drop-btn {
    width: 16px;
    height: 20px;
    margin-left: auto;
}

.buttons {
    grid-column: 3;
    display: flex;
    gap: 12px;
}

.btn {
    width: 88px;
    height: 26px;
    display: flex;
    align-items: center;
    justify-content: center;
    letter-spacing: 0.3px;
    border: 1px solid;
    border-color: #fff #404040 #404040 #fff;
    box-shadow: inset -1px -1px 0 #808080;
}

.btn.open {
    border-color: #000;
    box-shadow: inset 1px 1px 0 #fff, inset -1px -1px 0 #404040;
}

.open > span {
    flex: 1;
    text-align: center;
}

.split {
    width: 15px;
    height: 22px;
    display: flex;
    align-items: center;
    justify-content: center;
    border-left: 1px solid #808080;
    box-shadow: inset 1px 0 0 #fff;
}

.grip {
    position: absolute;
    right: 1px;
    bottom: 1px;
}
```
